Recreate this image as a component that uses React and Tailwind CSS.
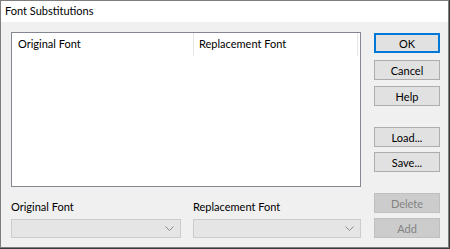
import React from 'react';

const font = { fontFamily: 'Lato, "Segoe UI", sans-serif' };

const Btn = ({ label, primary, disabled, className = '' }) => (
  <button
    className={`w-[66px] h-[20px] text-[11px] leading-none flex items-center justify-center border ${
      disabled
        ? 'bg-[#cccccc] border-[#bfbfbf] text-[#838383]'
        : primary
        ? 'bg-[#e1e1e1] border-[#0078d7] border-2 text-black'
        : 'bg-[#e1e1e1] border-[#adadad] text-black'
    } ${className}`}
  >
    {label}
  </button>
);

const Combo = ({ w }) => (
  <div className={`${w} h-[19px] bg-[#e5e5e5] border border-[#cccccc] flex items-center justify-end pr-[6px]`}>
    <svg width="9" height="5" viewBox="0 0 9 5" fill="none">
      <path d="M0.5 0.5 L4.5 4.5 L8.5 0.5" stroke="#8a8a8a" strokeWidth="1" />
    </svg>
  </div>
);

export default function App() {
  return (
    <div className="w-[450px] h-[249px] bg-[#3a3a3a] overflow-hidden" style={font}>
      <div className="w-[449px] h-[248px] border border-[#7e7e7e] bg-[#f0f0f0] flex flex-col">
        <div className="h-[21px] bg-white flex items-center px-[4px] text-[11px] text-black">
          Font Substitutions
        </div>

        <div className="flex pt-[10px] pl-[10px]">
          <div className="w-[350px] flex flex-col">
            <div className="h-[155px] bg-white border border-[#828790] text-[11px] text-black">
              <div className="flex h-[23px] items-center">
                <div className="w-[182px] h-full flex items-center pl-[6px] border-r border-[#e5e5e5]">Original Font</div>
                <div className="w-[164px] h-full flex items-center pl-[5px] border-r border-[#e5e5e5]">Replacement Font</div>
              </div>
            </div>

            <div className="flex mt-[11px] text-[11px] text-black">
              <div className="w-[182px] flex flex-col">
                <div className="h-[17px] leading-[17px]">Original Font</div>
                <Combo w="w-[170px] mt-[4px]" />
              </div>
              <div className="flex flex-col">
                <div className="h-[17px] leading-[17px]">Replacement Font</div>
                <Combo w="w-[168px] mt-[4px]" />
              </div>
            </div>
          </div>

          <div className="flex flex-col ml-[13px] mt-[1px]">
            <Btn label="OK" primary />
            <Btn label="Cancel" className="mt-[7px]" />
            <Btn label="Help" className="mt-[6px]" />
            <Btn label="Load..." className="mt-[21px]" />
            <Btn label="Save..." className="mt-[5px]" />
            <Btn label="Delete" disabled className="mt-[21px]" />
            <Btn label="Add" disabled className="mt-[5px]" />
          </div>
        </div>
      </div>
    </div>
  );
}
